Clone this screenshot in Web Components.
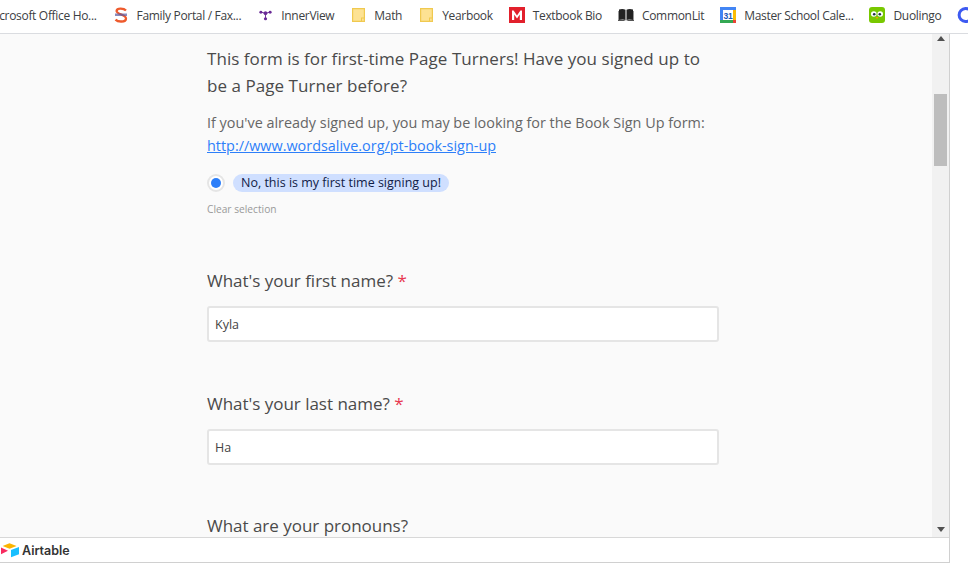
<!DOCTYPE html>
<html>
<head>
<meta charset="utf-8">
<title>Page Turners</title>
<style>
  html, body { margin: 0; height: 100%; background: #fff; overflow: hidden; }
  body { font-family: "Open Sans", "Noto Sans", sans-serif; color: #444; }
</style>
</head>
<body>
<app-shell>
  <bookmark-bar slot="bar">
    <book-mark label="Microsoft Office Ho..." style="margin-left:-14px"></book-mark>
    <book-mark label="Family Portal / Fax..."><svg slot="icon" width="16" height="18" viewBox="0 0 16 18"><path d="M13 4.500C11 2.400 4 1.600 3.600 5c-.4 3.200 9.600 3.400 9.400 7.600-.2 3.800-8 3.600-10.500 1" fill="none" stroke="#ee5a2c" stroke-width="2.300"/><rect x="2" y="7.500" width="12" height="2.500" fill="#5a5aa0" opacity=".7"/></svg></book-mark>
    <book-mark label="InnerView"><svg slot="icon" width="13" height="12" viewBox="0 0 14 12"><g fill="#6a2a96"><circle cx="2" cy="3" r="1.600"/><circle cx="12" cy="3" r="1.600"/><circle cx="7" cy="4" r="2"/><circle cx="7" cy="10" r="1.700"/></g><path d="M2 3l5 1 5-1M7 4v6" stroke="#6a2a96" fill="none"/></svg></book-mark>
    <book-mark label="Math"><folder-icon slot="icon"></folder-icon></book-mark>
    <book-mark label="Yearbook"><folder-icon slot="icon"></folder-icon></book-mark>
    <book-mark label="Textbook Bio"><svg slot="icon" width="16" height="16" viewBox="0 0 16 16"><rect width="16" height="16" fill="#e2202c"/><path d="M3 13V3.500h1.600L8 8.500l3.400-5H13V13h-2.200V7.500L8 11.500 5.200 7.500V13z" fill="#fff"/></svg></book-mark>
    <book-mark label="CommonLit"><svg slot="icon" width="16" height="14" viewBox="0 0 16 14"><path d="M1 1.500C3 .7 6 .7 7.500 1.800V12C6 11.200 3 11.200 1 12zM15 1.500C13 .7 10 .7 8.500 1.800V12C10 11.200 13 11.200 15 12z" fill="#222"/><path d="M0 3v10h16V3h-.6v9C13 11.600 10 11.800 8 13 6 11.800 3 11.600.6 12V3z" fill="#555"/></svg></book-mark>
    <book-mark label="Master School Cale..."><svg slot="icon" width="16" height="16" viewBox="0 0 16 16"><rect width="16" height="16" rx="1" fill="#fff"/><rect width="16" height="3" fill="#4285f4"/><rect width="3" height="16" fill="#4285f4"/><rect x="13" y="3" width="3" height="10" fill="#fbbc04"/><rect y="13" width="13" height="3" fill="#34a853"/><rect x="13" y="13" width="3" height="3" fill="#ea4335"/><text x="8" y="11.500" font-size="8.500" font-weight="700" text-anchor="middle" fill="#1a56b8" font-family="Liberation Sans">31</text></svg></book-mark>
    <book-mark label="Duolingo"><svg slot="icon" width="16" height="16" viewBox="0 0 16 16"><rect width="16" height="16" rx="3" fill="#78c800"/><circle cx="4.800" cy="7" r="2.800" fill="#fff"/><circle cx="11.200" cy="7" r="2.800" fill="#fff"/><circle cx="5.200" cy="7.300" r="1.300" fill="#234"/><circle cx="10.800" cy="7.300" r="1.300" fill="#234"/><path d="M6.700 10h2.600L8 12z" fill="#f90"/></svg></book-mark>
    <svg width="16" height="16" viewBox="0 0 16 16" style="flex:none;margin-top:7px"><path d="M13 3.200A6.500 6.500 0 1 0 13 12.800" fill="none" stroke="#3d5af1" stroke-width="3"/></svg>
  </bookmark-bar>

  <form-pane slot="pane">
    <form-question style="--title-spacing:.05px">
      This form is for first-time Page Turners! Have you signed up to be a Page Turner before?
      <question-help slot="help">If you've already signed up, you may be looking for the Book Sign Up form: <a href="#">http://www.wordsalive.org/pt-book-sign-up</a></question-help>
      <radio-choice slot="field" label="No, this is my first time signing up!"></radio-choice>
    </form-question>
    <form-question required style="margin-top:51px">
      What's your first name?
      <text-field slot="field" value="Kyla"></text-field>
    </form-question>
    <form-question required style="margin-top:48px">
      What's your last name?
      <text-field slot="field" value="Ha"></text-field>
    </form-question>
    <form-question style="margin-top:47px">What are your pronouns?</form-question>
  </form-pane>

  <airtable-foot slot="foot"></airtable-foot>
</app-shell>

<script>
"use strict";

class AppShell extends HTMLElement {
    connectedCallback() {
        this.attachShadow({ mode: 'open' }).innerHTML = `
        <style>
            :host { display: block; width: 968px; height: 581px; overflow: hidden; }
            .frame { width: 949px; height: 528px; border-right: 1px solid #d0d0d0; border-bottom: 1px solid #d0d0d0; display: flex; flex-direction: column; }
            .mid { height: 503px; flex: none; display: flex; background: #fafafa; overflow: hidden; }
        </style>
        <slot name="bar"></slot>
        <div class="frame">
            <div class="mid"><slot name="pane"></slot><scroll-rail></scroll-rail></div>
            <slot name="foot"></slot>
        </div>
        `;
    }
}

class BookmarkBar extends HTMLElement {
    connectedCallback() {
        this.attachShadow({ mode: 'open' }).innerHTML = `
        <style>
            :host { display: flex; align-items: flex-start; gap: 16px; height: 33px; border-bottom: 1px solid #dadce0; background: #fff; overflow: hidden; white-space: nowrap; }
        </style>
        <slot></slot>
        `;
    }
}

class BookMark extends HTMLElement {
    connectedCallback() {
        const label = this.getAttribute('label');
        const hasIcon = this.children.length > 0;
        this.attachShadow({ mode: 'open' }).innerHTML = `
        <style>
            :host { display: flex; align-items: center; gap: 8px; flex: none; font: 12px "Open Sans", sans-serif; letter-spacing: -.32px; color: #3c4043; height: 30px; }
            .ic { display: flex; align-items: center; justify-content: center; width: 16px; }
        </style>
        ${hasIcon ? '<span class="ic"><slot name="icon"></slot></span>' : ''}
        <span>${label}</span>
        `;
    }
}

class FolderIcon extends HTMLElement {
    connectedCallback() {
        this.attachShadow({ mode: 'open' }).innerHTML = `
        <style>:host { display: block; width: 13px; height: 14px; }</style>
        <svg width="13" height="14" viewBox="0 0 13 14" style="display:block"><path d="M.6 .6H12.400V13.400H.6z" fill="#fde293" stroke="#f0c94f" stroke-width="1.200"/><rect x="9.500" y="10" width="2.800" height="3.300" fill="#fde293" stroke="#f0c94f"/></svg>
        `;
    }
}

class FormPane extends HTMLElement {
    connectedCallback() {
        this.attachShadow({ mode: 'open' }).innerHTML = `
        <style>
            :host { display: block; flex: none; width: 932px; height: 503px; box-sizing: border-box; padding: 11px 0 0 207px; overflow: hidden; }
            .col { width: 512px; }
        </style>
        <div class="col"><slot></slot></div>
        `;
    }
}

class FormQuestion extends HTMLElement {
    connectedCallback() {
        const star = this.hasAttribute('required') ? '<span class="req"> *</span>' : '';
        this.attachShadow({ mode: 'open' }).innerHTML = `
        <style>
            :host { display: block; }
            .title { font-size: 17px; letter-spacing: var(--title-spacing, -.02px); line-height: 27px; color: #4a4a4a; }
            .req { color: #e8384f; }
            .field { display: block; margin-top: 12px; }
        </style>
        <div class="title"><slot></slot>${star}</div>
        <slot name="help"></slot>
        <div class="field"><slot name="field"></slot></div>
        `;
    }
}

class QuestionHelp extends HTMLElement {
    connectedCallback() {
        this.attachShadow({ mode: 'open' }).innerHTML = `
        <style>
            :host { display: block; margin-top: 12px; font-size: 14.400px; line-height: 23px; color: #666; }
            ::slotted(a) { color: #2d7ff9; text-decoration: underline; }
        </style>
        <slot></slot>
        `;
    }
}

class RadioChoice extends HTMLElement {
    connectedCallback() {
        this.attachShadow({ mode: 'open' }).innerHTML = `
        <style>
            :host { display: block; margin-top: 16px; }
            .row { display: flex; align-items: center; gap: 8px; height: 20px; }
            .dot { box-sizing: border-box; width: 18px; height: 18px; border-radius: 50%; border: 2px solid #e5e5e5; background: #fff; display: flex; align-items: center; justify-content: center; }
            .dot i { display: block; width: 10px; height: 10px; border-radius: 50%; background: #2d7ff9; }
            .pill { background: #cfdfff; color: #102046; border-radius: 9px; padding: 0 8px; font-size: 12.500px; line-height: 18px; }
            .clear { margin-top: 9px; font-size: 10.200px; line-height: 14px; color: #999; }
        </style>
        <div class="row"><span class="dot"><i></i></span><span class="pill">${this.getAttribute('label')}</span></div>
        <div class="clear">Clear selection</div>
        `;
    }
}

class TextField extends HTMLElement {
    connectedCallback() {
        this.attachShadow({ mode: 'open' }).innerHTML = `
        <style>
            :host { display: block; }
            .box { box-sizing: border-box; height: 36px; border: 2px solid #e5e5e5; border-radius: 3px; background: #fff; padding: 1px 6px 0; font-size: 12.500px; line-height: 32px; color: #444; }
        </style>
        <div class="box">${this.getAttribute('value')}</div>
        `;
    }
}

class ScrollRail extends HTMLElement {
    connectedCallback() {
        this.attachShadow({ mode: 'open' }).innerHTML = `
        <style>
            :host { display: flex; flex-direction: column; flex: none; width: 17px; height: 503px; background: #f1f1f1; }
            .btn { display: flex; justify-content: center; box-sizing: border-box; }
            .btn svg { display: block; }
            .track { flex: 1; padding: 51px 2px 0; }
            .thumb { height: 72px; background: #bdbdbd; }
        </style>
        <div class="btn" style="height:9px;padding-top:2px"><svg width="8" height="5" viewBox="0 0 8 5"><path d="M4 0l4 5H0z" fill="#505050"/></svg></div>
        <div class="track"><div class="thumb"></div></div>
        <div class="btn" style="height:14px;padding-top:4px"><svg width="8" height="5" viewBox="0 0 8 5"><path d="M0 0h8L4 5z" fill="#505050"/></svg></div>
        `;
    }
}

class AirtableFoot extends HTMLElement {
    connectedCallback() {
        this.attachShadow({ mode: 'open' }).innerHTML = `
        <style>
            :host { display: flex; align-items: center; gap: 3px; height: 25px; box-sizing: border-box; border-top: 1px solid #d8d8d8; background: #fff; padding-left: 1px; font: 600 12.500px "Inter", sans-serif; color: #333; }
        </style>
        <svg width="18" height="15" viewBox="0 0 18 15"><path d="M8.500.3L1.600 3l7 2.800 7-2.800z" fill="#fcb400"/><path d="M10 7v7.300l8-3.100V4z" fill="#18bfff"/><path d="M0 4.500v6.700l7-3.500z" fill="#f82b60"/></svg>
        <span>Airtable</span>
        `;
    }
}

customElements.define('app-shell', AppShell);
customElements.define('bookmark-bar', BookmarkBar);
customElements.define('book-mark', BookMark);
customElements.define('folder-icon', FolderIcon);
customElements.define('form-pane', FormPane);
customElements.define('form-question', FormQuestion);
customElements.define('question-help', QuestionHelp);
customElements.define('radio-choice', RadioChoice);
customElements.define('text-field', TextField);
customElements.define('scroll-rail', ScrollRail);
customElements.define('airtable-foot', AirtableFoot);
</script>
</body>
</html>
